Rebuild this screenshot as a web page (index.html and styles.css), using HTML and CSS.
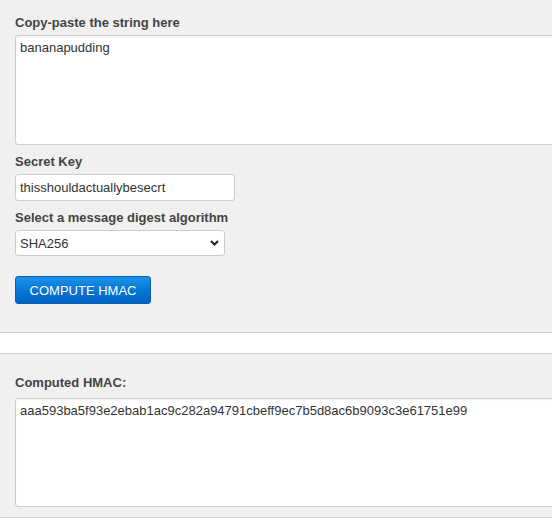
FILE: index.html
```html
<!DOCTYPE html>
<html>
<head>
<meta charset="utf-8">
<link rel="stylesheet" href="styles.css">
</head>
<body>
<div class="panel panel-input">
  <label class="lbl">Copy-paste the string here</label>
  <textarea class="area area-input">bananapudding</textarea>
  <label class="lbl lbl-gap">Secret Key</label>
  <input class="field key" type="text" value="thisshouldactuallybesecrt">
  <label class="lbl lbl-gap">Select a message digest algorithm</label>
  <div class="select-wrap">
    <select class="field algo">
      <option>SHA256</option>
    </select>
    <svg class="chev" width="9" height="6" viewBox="0 0 9 6"><path d="M1 1 L4.5 4.5 L8 1" fill="none" stroke="#222" stroke-width="2"/></svg>
  </div>
  <div class="actions">
    <button class="btn">COMPUTE HMAC</button>
  </div>
</div>
<div class="panel panel-output">
  <label class="lbl lbl-out">Computed HMAC:</label>
  <textarea class="area area-output">aaa593ba5f93e2ebab1ac9c282a94791cbeff9ec7b5d8ac6b9093c3e61751e99</textarea>
</div>
</body>
</html>
```

FILE: styles.css
```css
html, body {
  margin: 0;
  padding: 0;
  background: #ffffff;
  overflow: hidden;
}
body {
  font-family: "Liberation Sans", Arial, sans-serif;
  font-size: 13px;
  color: #333;
}
.panel {
  background: #f0f0f0;
  padding-left: 15px;
  border-bottom: 1px solid #cfcfcf;
}
.panel-input {
  padding-top: 15px;
  padding-bottom: 28px;
}
.panel-output {
  margin-top: 20px;
  border-top: 1px solid #cfcfcf;
  padding-top: 21px;
  padding-bottom: 10px;
}
.lbl {
  display: block;
  font-weight: bold;
  font-size: 13px;
  line-height: 16px;
  color: #444;
  margin-bottom: 4px;
}
.lbl-gap {
  margin-top: 9px;
}
.lbl-out {
  margin-bottom: 7px;
}
.area {
  display: block;
  box-sizing: border-box;
  width: 600px;
  margin: 0;
  padding: 4px 4px;
  border: 1px solid #cccccc;
  border-radius: 3px;
  background: #fff;
  font-family: "Liberation Sans", Arial, sans-serif;
  font-size: 13px;
  line-height: 16px;
  color: #333;
  resize: none;
  box-shadow: inset 0 1px 2px rgba(0,0,0,0.06);
  outline: none;
}
.area-input {
  height: 110px;
}
.area-output {
  height: 109px;
}
.field {
  display: block;
  box-sizing: border-box;
  margin: 0;
  border: 1px solid #cccccc;
  border-radius: 3px;
  background: #fff;
  font-family: "Liberation Sans", Arial, sans-serif;
  font-size: 13px;
  color: #333;
  outline: none;
}
.key {
  width: 220px;
  height: 27px;
  padding: 0 4px;
}
.select-wrap {
  position: relative;
  width: 210px;
}
.algo {
  width: 210px;
  height: 26px;
  padding: 0 4px;
  -webkit-appearance: none;
  appearance: none;
}
.chev {
  position: absolute;
  right: 6px;
  top: 10px;
  pointer-events: none;
}
.actions {
  margin-top: 20px;
}
.btn {
  display: block;
  box-sizing: border-box;
  width: 136px;
  height: 28px;
  margin: 0;
  padding: 0;
  border: 1px solid #0a5cae;
  border-radius: 3px;
  background: linear-gradient(to bottom, #1a93ea 0%, #0677d6 50%, #0064c4 100%);
  color: #fff;
  font-family: "Liberation Sans", Arial, sans-serif;
  font-size: 13px;
  text-shadow: 0 -1px 0 rgba(0,0,0,0.15);
  cursor: pointer;
}
```
